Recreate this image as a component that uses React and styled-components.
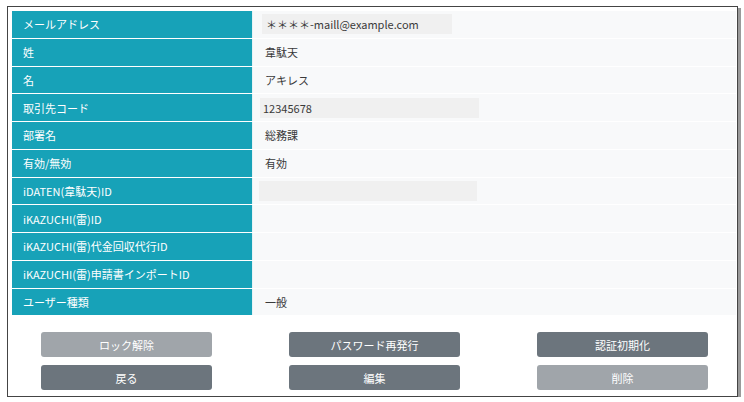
import React from 'react';
import styled, { createGlobalStyle } from 'styled-components';

const GlobalStyle = createGlobalStyle`
  html, body {
    margin: 0;
    padding: 0;
    background: #fff;
  }
  body {
    font-family: "Noto Sans CJK JP", "Noto Sans", sans-serif;
    font-size: 11px;
    color: #3a3a3a;
  }
`;

const Frame = styled.div`
  box-sizing: border-box;
  margin: 6px 0 0 7px;
  width: 731px;
  height: 391px;
  border: 1px solid #444;
  box-shadow: 3px 2px 0 #9a9a9a;
  padding: 4px 1px 0 4px;
  display: flex;
  flex-direction: column;
`;

const Table = styled.div`
  display: flex;
  flex-direction: column;
`;

const Row = styled.div`
  display: grid;
  grid-template-columns: 241px 1fr;
  height: 27.75px;
  box-sizing: border-box;
  border-bottom: 1px solid #fff;
`;

const Label = styled.div`
  background: #17a2b8;
  color: #fff;
  display: flex;
  align-items: center;
  padding-left: 11px;
  border-right: 1px solid #e6f3f5;
`;

const Value = styled.div`
  background: #f8f9fa;
  display: flex;
  align-items: center;
  padding-left: 12px;
`;

const Field = styled.div`
  box-sizing: border-box;
  background: #f0f0f0;
  height: 20px;
  width: ${p => p.w}px;
  margin-left: ${p => p.ml}px;
  padding-left: ${p => p.pl || 3}px;
  display: flex;
  align-items: center;
`;

const Buttons = styled.div`
  display: grid;
  grid-template-columns: repeat(3, 171px);
  column-gap: 77px;
  row-gap: 8px;
  padding: 16px 0 0 29px;
`;

const Button = styled.button`
  height: 25px;
  border: none;
  border-radius: 3px;
  background: ${p => (p.disabled ? '#a0a5aa' : '#6c757d')};
  color: #fff;
  font-family: inherit;
  font-size: 11px;
  padding: 0;
`;

const rows = [
  { label: 'メールアドレス', field: { w: 190, ml: -3, pl: 4 }, value: '＊＊＊＊-maill@example.com' },
  { label: '姓', value: '韋駄天' },
  { label: '名', value: 'アキレス' },
  { label: '取引先コード', field: { w: 219, ml: -5, pl: 3 }, value: '12345678' },
  { label: '部署名', value: '総務課' },
  { label: '有効/無効', value: '有効' },
  { label: 'iDATEN(韋駄天)ID', field: { w: 218, ml: -6 }, value: '' },
  { label: 'iKAZUCHI(雷)ID', value: '' },
  { label: 'iKAZUCHI(雷)代金回収代行ID', value: '' },
  { label: 'iKAZUCHI(雷)申請書インポートID', value: '' },
  { label: 'ユーザー種類', value: '一般' },
];

const buttons = [
  { text: 'ロック解除', disabled: true },
  { text: 'パスワード再発行' },
  { text: '認証初期化' },
  { text: '戻る' },
  { text: '編集' },
  { text: '削除', disabled: true },
];

export default function App() {
  return (
    <>
      <GlobalStyle />
      <Frame>
        <Table>
          {rows.map(r => (
            <Row key={r.label}>
              <Label>{r.label}</Label>
              <Value>
                {r.field ? (
                  <Field w={r.field.w} ml={r.field.ml} pl={r.field.pl}>{r.value}</Field>
                ) : r.value}
              </Value>
            </Row>
          ))}
        </Table>
        <Buttons>
          {buttons.map(b => (
            <Button key={b.text} disabled={b.disabled}>{b.text}</Button>
          ))}
        </Buttons>
      </Frame>
    </>
  );
}
